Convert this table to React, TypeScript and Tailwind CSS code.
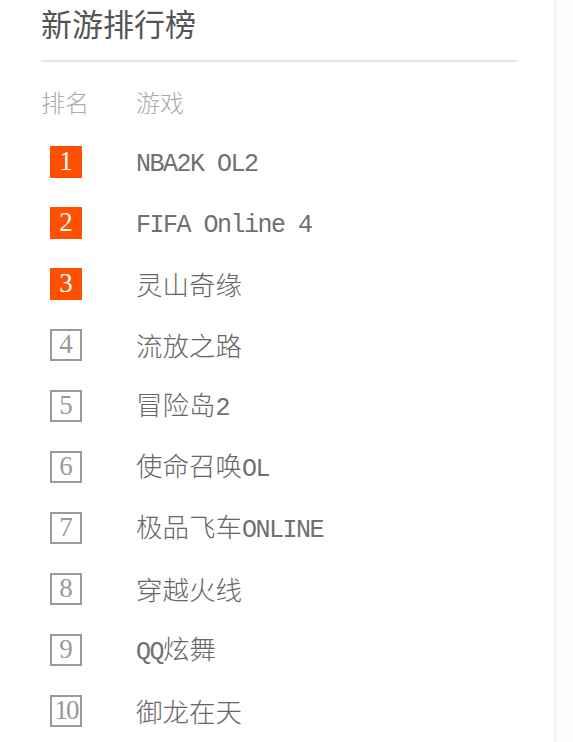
const games = [
  'NBA2K OL2',
  'FIFA Online 4',
  '灵山奇缘',
  '流放之路',
  '冒险岛2',
  '使命召唤OL',
  '极品飞车ONLINE',
  '穿越火线',
  'QQ炫舞',
  '御龙在天',
];

// 中文和英文分开排版，英文用等宽字体
function GameName({ name }: { name: string }) {
  const parts = name.match(/[\u4e00-\u9fff]+|[^\u4e00-\u9fff]+/g) || [];
  return (
    <span className="whitespace-pre font-['Noto_Sans_CJK_SC',sans-serif] text-[26.5px] font-light text-[#666]">
      {parts.map((part, i) =>
        /[\u4e00-\u9fff]/.test(part) ? (
          <span key={i}>{part}</span>
        ) : (
          <span key={i} className="font-['Liberation_Mono',monospace] text-[25px] font-normal tracking-[-1.5px] text-[#707070]">
            {part}
          </span>
        ),
      )}
    </span>
  );
}

function RankBadge({ rank }: { rank: number }) {
  const top = rank <= 3;
  return (
    <span
      className={`flex h-[32px] w-[32px] items-center justify-center font-['Liberation_Serif',serif] text-[27px] leading-none ${
        top ? 'bg-[#ff5000] text-white' : 'border-2 border-[#9a9a9a] text-[#999]'
      } ${rank >= 10 ? 'tracking-[-2px]' : ''}`}
    >
      {rank}
    </span>
  );
}

export default function App() {
  return (
    <div className="flex min-h-screen bg-white">
      <div className="w-[554px] shrink-0 pl-[41px]">
        <div className="w-[476px]">
          <h2 className="font-['Noto_Sans_CJK_SC',sans-serif] text-[31px] leading-[45px] font-normal text-[#555]">
            新游排行榜
          </h2>
          <div className="mt-[15px] h-[2px] bg-[#e6e6e6]" />

          <div className="mt-[9px] flex h-[61px] items-center font-['Noto_Sans_CJK_SC',sans-serif] text-[24px] font-light text-[#aaa]">
            <span className="w-[95px]">排名</span>
            <span>游戏</span>
          </div>

          <ul className="-mt-[1px]">
            {games.map((name, i) => (
              <li key={name} className="flex h-[61px] items-center">
                <div className="w-[95px] pl-[9px]">
                  <RankBadge rank={i + 1} />
                </div>
                <GameName name={name} />
              </li>
            ))}
          </ul>
        </div>
      </div>
      <div className="flex-1 border-l-2 border-[#f2f2f2] bg-[#fcfcfc]" />
    </div>
  );
}
